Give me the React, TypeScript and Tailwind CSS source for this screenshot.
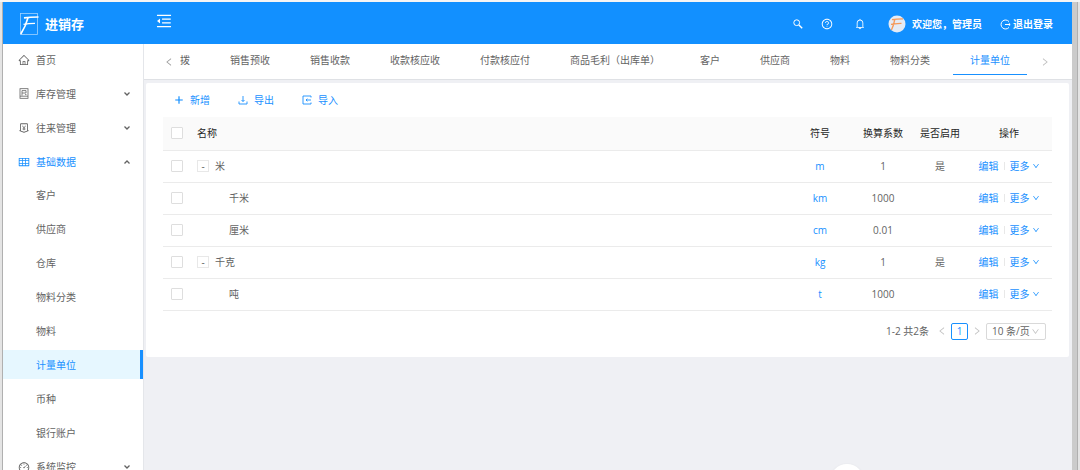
import clsx from "clsx";
import type { ReactNode } from "react";
import {
  AiOutlineBell,
  AiOutlineDashboard,
  AiOutlineDown,
  AiOutlineHome,
  AiOutlineLeft,
  AiOutlineMenuFold,
  AiOutlineMoneyCollect,
  AiOutlinePlus,
  AiOutlineQuestionCircle,
  AiOutlineRight,
  AiOutlineTable,
} from "react-icons/ai";

type Unit = {
  name: string;
  symbol: string;
  factor: string;
  enabled?: string;
  parent?: boolean;
};

const units: Unit[] = [
  { name: "米", symbol: "m", factor: "1", enabled: "是", parent: true },
  { name: "千米", symbol: "km", factor: "1000" },
  { name: "厘米", symbol: "cm", factor: "0.01" },
  { name: "千克", symbol: "kg", factor: "1", enabled: "是", parent: true },
  { name: "吨", symbol: "t", factor: "1000" },
];

const baseItems = [
  "客户",
  "供应商",
  "仓库",
  "物料分类",
  "物料",
  "计量单位",
  "币种",
  "银行账户",
];

const tabs = [
  "拨",
  "销售预收",
  "销售收款",
  "收款核应收",
  "付款核应付",
  "商品毛利（出库单）",
  "客户",
  "供应商",
  "物料",
  "物料分类",
  "计量单位",
];

function LogoMark() {
  return (
    <svg viewBox="0 0 20 22" className="h-[22px] w-5" fill="none" stroke="white">
      <rect x="1.5" y="0.5" width="17" height="21" strokeWidth="0.8" opacity="0.6" />
      <path d="M5 4.800c4.500-.6 9-.8 14.500-.8" strokeWidth="1.700" />
      <path d="M9 4.600C7.500 10.500 5 16 1.800 21" strokeWidth="1.700" />
      <path d="M4.500 11.400c4-.7 7-.9 11.500-1" strokeWidth="1.400" />
    </svg>
  );
}

function Avatar() {
  return (
    <svg viewBox="0 0 18 18" className="size-[18px]" fill="none">
      <circle cx="9" cy="9" r="8.500" fill="#e4ebf5" />
      <path d="M4 4.600c3.500-.6 7-.8 11-.8M6.800 4.500C6 8.500 5 12 3.400 15M3 9.300c3-.6 7-.8 10.500-1" stroke="#f5995a" strokeWidth="1.300" />
    </svg>
  );
}

function SearchIcon() {
  return (
    <svg viewBox="0 0 10 10" className="size-2.5" fill="none" stroke="currentColor">
      <circle cx="3.700" cy="3.700" r="2.900" strokeWidth="1" />
      <path d="M5.900 5.900 9.200 9.200" strokeWidth="1.400" />
    </svg>
  );
}

function LogoutIcon() {
  return (
    <svg viewBox="0 0 11 11" className="size-[11px]" fill="none" stroke="currentColor" strokeWidth="1">
      <path d="M9 2.600A4.500 4.500 0 1 0 9 8.400M5 5.500h5M8.800 4.200l1.400 1.300-1.400 1.300" />
    </svg>
  );
}

function StockIcon() {
  return (
    <svg viewBox="0 0 10 11" className="h-[11px] w-2.5" fill="none" stroke="currentColor" strokeWidth="0.8">
      <rect x="1" y="0.700" width="8" height="9.600" />
      <path d="M3 2.600v5M3 2.600h4M3 5h4M7 2.600V5M1 8.200h8" />
      <path d="M6 6.600h1.500" />
    </svg>
  );
}

function ExportIcon() {
  return (
    <svg viewBox="0 0 10 10" className="size-2.5" fill="none" stroke="currentColor" strokeWidth="0.9">
      <path d="M5 1v5.500M3.500 5 5 6.500 6.500 5M1 6.500v2.500h8V6.500" />
    </svg>
  );
}

function ImportIcon() {
  return (
    <svg viewBox="0 0 10 10" className="size-2.5" fill="none" stroke="currentColor" strokeWidth="0.9">
      <path d="M9 2.500V1H1v8h8V7.500M4 5h5M5.400 3.700 4 5l1.400 1.300" />
    </svg>
  );
}

function Caret({ open }: { open?: boolean }) {
  return (
    <svg
      viewBox="0 0 8 6"
      className={clsx("ml-auto h-1.5 w-2", open && "rotate-180")}
      fill="none"
      stroke="currentColor"
      strokeWidth="1.300"
    >
      <path d="M1.500 1.500 4 4 6.500 1.500" />
    </svg>
  );
}

function MenuGroup({
  icon,
  label,
  open,
  leaf,
  children,
}: {
  icon: ReactNode;
  label: string;
  open?: boolean;
  leaf?: boolean;
  children?: ReactNode;
}) {
  return (
    <li>
      <button
        type="button"
        className="flex h-[29px] w-full items-center gap-1.5 pr-3 pl-[15px]"
      >
        <span className={clsx("flex w-3 justify-center text-[12px]", open && "text-[#1890ff]")}>
          {icon}
        </span>
        <span className={clsx(open && "text-[#1890ff]")}>{label}</span>
        {!leaf && <Caret open={open} />}
      </button>
      {children}
    </li>
  );
}

function Sidebar() {
  return (
    <nav className="w-[141px] shrink-0 overflow-hidden border-r border-[#e4e6ea] bg-white pt-px">
      <ul className="flex flex-col gap-[5px]">
        <MenuGroup icon={<AiOutlineHome />} label="首页" leaf />
        <MenuGroup icon={<StockIcon />} label="库存管理" />
        <MenuGroup icon={<AiOutlineMoneyCollect />} label="往来管理" />
        <MenuGroup icon={<AiOutlineTable />} label="基础数据" open>
          <ul className="mt-1 flex flex-col gap-[5px]">
            {baseItems.map((item) => (
              <li key={item}>
                <a
                  href="#"
                  className={clsx(
                    "flex h-[29px] items-center pl-[33px]",
                    item === "计量单位" &&
                      "border-r-[3px] border-[#1890ff] bg-[#e6f7ff] text-[#1890ff]",
                  )}
                >
                  {item}
                </a>
              </li>
            ))}
          </ul>
        </MenuGroup>
        <MenuGroup icon={<AiOutlineDashboard />} label="系统监控" />
      </ul>
    </nav>
  );
}

function Header() {
  return (
    <header className="flex h-[42px] shrink-0 items-center bg-[#1290ff] pt-0.5 pr-[19px] pl-4 text-white">
      <LogoMark />
      <h1 className="ml-1.5 text-[13px] font-bold">进销存</h1>
      <button type="button" aria-label="收起菜单" className="mb-1.5 ml-[71px] text-[18px]">
        <AiOutlineMenuFold />
      </button>
      <div className="ml-auto flex items-center">
        <button type="button" aria-label="搜索">
          <SearchIcon />
        </button>
        <button type="button" aria-label="帮助" className="ml-[18px] text-[12px]">
          <AiOutlineQuestionCircle />
        </button>
        <button type="button" aria-label="通知" className="ml-[21px] text-[12px]">
          <AiOutlineBell />
        </button>
        <div className="ml-[22px] flex items-center gap-1.5 font-bold">
          <Avatar />
          <span>欢迎您，管理员</span>
        </div>
        <button type="button" className="ml-[18px] flex items-center gap-0.5 font-bold">
          <LogoutIcon />
          退出登录
        </button>
      </div>
    </header>
  );
}

function TabBar() {
  return (
    <div className="flex h-9 items-center border-b border-[#dfe1e5] bg-white pr-5 pl-5">
      <button type="button" aria-label="向前" className="text-[10px] text-[#999]">
        <AiOutlineLeft />
      </button>
      <div role="tablist" className="ml-1.5 flex h-full flex-1 items-start gap-1.5 overflow-hidden">
        {tabs.map((tab, i) => (
          <button
            key={tab}
            type="button"
            role="tab"
            aria-selected={tab === "计量单位"}
            className={clsx(
              "h-[31px] shrink-0 border-b pt-px whitespace-nowrap",
              i === 0 ? "pr-[17px]" : "px-[17px]",
              tab === "计量单位" ? "border-[#1890ff] text-[#1890ff]" : "border-transparent",
            )}
          >
            {tab}
          </button>
        ))}
      </div>
      <button type="button" aria-label="向后" className="mr-0.5 text-[10px] text-[#bbb]">
        <AiOutlineRight />
      </button>
    </div>
  );
}

function Checkbox({ label }: { label: string }) {
  return (
    <input
      type="checkbox"
      aria-label={label}
      className="block size-3 appearance-none rounded-[1px] border border-[#dedede] bg-white checked:bg-[#1890ff]"
    />
  );
}

function UnitTable() {
  return (
    <table className="w-full table-fixed">
      <thead className="bg-[#fafafa] text-[#262626]">
        <tr className="h-[33px] border-b border-[#ebebeb]">
          <th className="w-7 pl-2">
            <Checkbox label="全选" />
          </th>
          <th className="pl-1.5 text-left font-normal">名称</th>
          <th className="w-16 font-normal">符号</th>
          <th className="w-[62px] font-normal">换算系数</th>
          <th className="w-[52px] font-normal">是否启用</th>
          <th className="w-[86px] font-normal">操作</th>
        </tr>
      </thead>
      <tbody>
        {units.map((unit) => (
          <tr key={unit.name} className="h-8 border-b border-[#ebebeb] text-center">
            <td className="pl-2">
              <Checkbox label={unit.name} />
            </td>
            <td className="text-left">
              <div className={clsx("flex items-center gap-1.5", unit.parent ? "pl-1.5" : "pl-[38px]")}>
                {unit.parent && (
                  <button
                    type="button"
                    className="flex size-3 items-center justify-center border border-[#e8e8e8] leading-none"
                  >
                    -
                  </button>
                )}
                {unit.name}
              </div>
            </td>
            <td className="text-[#1890ff]">{unit.symbol}</td>
            <td>{unit.factor}</td>
            <td>{unit.enabled}</td>
            <td>
              <div className="flex items-center justify-center text-[#1890ff]">
                <a href="#">编辑</a>
                <span className="mx-[5px] h-2 w-px bg-[#e8e8e8]" />
                <button type="button" className="flex items-center gap-0.5">
                  更多
                  <AiOutlineDown className="text-[8px]" />
                </button>
              </div>
            </td>
          </tr>
        ))}
      </tbody>
    </table>
  );
}

function Pagination() {
  return (
    <div className="mt-3 flex items-center justify-end pr-1.5">
      <span>1-2 共2条</span>
      <button type="button" aria-label="上一页" className="ml-2 text-[10px] text-[#bfbfbf]">
        <AiOutlineLeft />
      </button>
      <button
        type="button"
        className="mx-1 flex h-[17px] w-[17px] items-center justify-center rounded-[2px] border border-[#1890ff] leading-none text-[#1890ff]"
      >
        1
      </button>
      <button type="button" aria-label="下一页" className="text-[10px] text-[#bfbfbf]">
        <AiOutlineRight />
      </button>
      <div className="relative ml-1">
        <select
          aria-label="每页条数"
          className="block h-[17px] w-[60px] appearance-none rounded-[2px] border border-[#d9d9d9] bg-white pl-[5px] leading-[15px]"
        >
          <option>10 条/页</option>
        </select>
        <AiOutlineDown className="pointer-events-none absolute top-1 right-1.5 text-[9px] text-[#bfbfbf]" />
      </div>
    </div>
  );
}

export default function App() {
  return (
    <div className="flex h-screen flex-col overflow-hidden border-t-2 border-[#f5f5f5] bg-[#e4e4e4] font-['Open_Sans','Noto_Sans_CJK_SC',sans-serif] text-[10px] leading-4 text-[#636363]">
      <div className="mr-[3px] ml-0.5 flex min-h-0 flex-1 flex-col border-r-[5px] border-l border-r-[#cbcbcb] border-l-[#b0b0b0] bg-[#eff0f4] shadow-[1px_0_0_#b0b0b0]">
        <Header />
        <div className="flex min-h-0 flex-1">
          <Sidebar />
          <main className="min-w-0 flex-1">
            <TabBar />
            <section className="mt-[3px] mr-[3px] ml-0.5 rounded-[2px] bg-white px-[17px] pt-[9px] pb-[17px]">
              <div className="mb-[9px] flex gap-7 pl-[11px] text-[#1890ff]">
                <button type="button" className="flex items-center gap-1.5">
                  <AiOutlinePlus className="text-[10px] stroke-[40]" />
                  新增
                </button>
                <button type="button" className="flex items-center gap-1.5">
                  <ExportIcon />
                  导出
                </button>
                <button type="button" className="flex items-center gap-1.5">
                  <ImportIcon />
                  导入
                </button>
              </div>
              <UnitTable />
              <Pagination />
            </section>
          </main>
        </div>
      </div>
      <button
        type="button"
        aria-label="更多操作"
        className="fixed right-[216px] -bottom-7 size-[34px] rounded-full bg-white shadow-sm"
      />
    </div>
  );
}
